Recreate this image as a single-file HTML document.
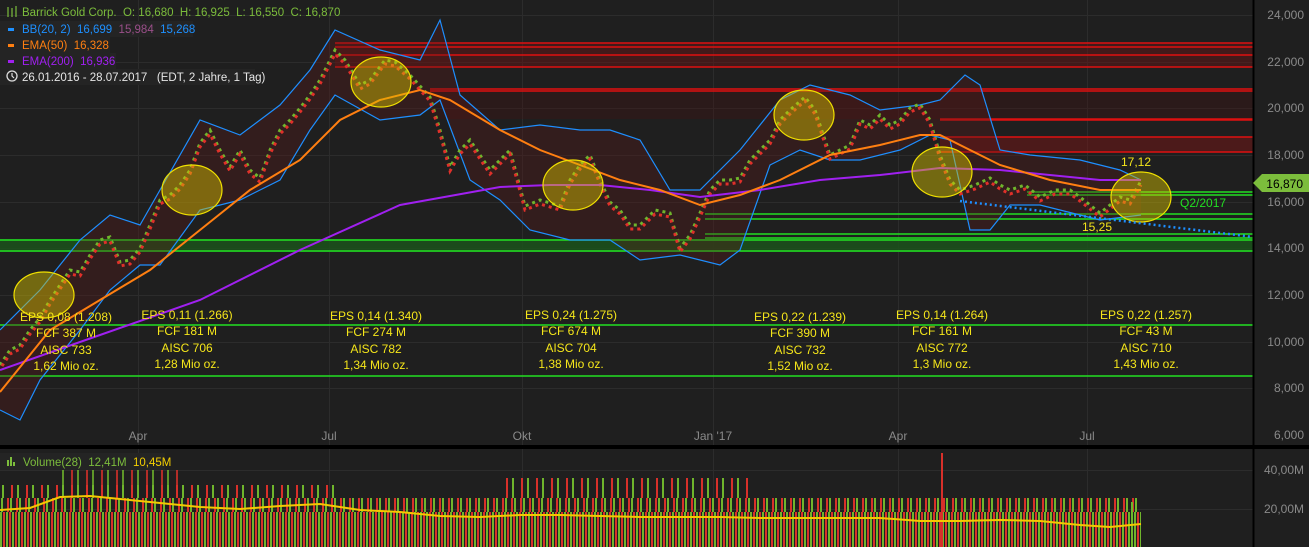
<!DOCTYPE html>
<html><head><meta charset="utf-8"><style>
html,body{margin:0;padding:0;background:#1f1f1f;overflow:hidden}
svg{display:block;font-family:"Liberation Sans",sans-serif}
</style></head><body>
<svg width="1309" height="547" viewBox="0 0 1309 547" xmlns="http://www.w3.org/2000/svg">
<defs>
<pattern id="vb" width="6" height="100" patternUnits="userSpaceOnUse"><rect x="0" y="0" width="2" height="100" fill="#6fb52c"/><rect x="3" y="0" width="2" height="100" fill="#d8302a"/></pattern>
<pattern id="vb2" width="9" height="100" patternUnits="userSpaceOnUse"><rect x="1" y="0" width="2" height="100" fill="#6fb52c"/><rect x="7" y="0" width="2" height="100" fill="#d8302a"/></pattern>
<pattern id="vb3" width="15" height="100" patternUnits="userSpaceOnUse"><rect x="2" y="0" width="2" height="100" fill="#6fb52c"/><rect x="11" y="0" width="2" height="100" fill="#d8302a"/></pattern>
</defs>
<rect width="1309" height="547" fill="#1f1f1f"/>
<g stroke="#2c2c2c">
<line x1="0" x2="1253" y1="15.5" y2="15.5"/><line x1="0" x2="1253" y1="62.5" y2="62.5"/><line x1="0" x2="1253" y1="108.5" y2="108.5"/><line x1="0" x2="1253" y1="155.5" y2="155.5"/><line x1="0" x2="1253" y1="202.5" y2="202.5"/><line x1="0" x2="1253" y1="248.5" y2="248.5"/><line x1="0" x2="1253" y1="295.5" y2="295.5"/><line x1="0" x2="1253" y1="342.5" y2="342.5"/><line x1="0" x2="1253" y1="388.5" y2="388.5"/><line x1="0" x2="1253" y1="470.5" y2="470.5"/><line x1="0" x2="1253" y1="509.5" y2="509.5"/>
<line x1="138.5" x2="138.5" y1="0" y2="547"/><line x1="329.5" x2="329.5" y1="0" y2="547"/><line x1="522.5" x2="522.5" y1="0" y2="547"/><line x1="713.5" x2="713.5" y1="0" y2="547"/><line x1="898.5" x2="898.5" y1="0" y2="547"/><line x1="1087.5" x2="1087.5" y1="0" y2="547"/>
</g>
<rect x="335" y="43" width="918" height="24" fill="#6a1515" opacity="0.45"/>
<rect x="430" y="89" width="823" height="30" fill="#4a1212" opacity="0.3"/>
<rect x="940" y="137" width="313" height="15" fill="#7a1515" opacity="0.5"/>
<rect x="0" y="239" width="1253" height="13" fill="#1a551a" opacity="0.8"/>
<g stroke="#e01010" stroke-width="1.5">
<line x1="335" x2="1253" y1="43" y2="43"/><line x1="335" x2="1253" y1="47" y2="47"/><line x1="335" x2="1253" y1="55" y2="55"/><line x1="335" x2="1253" y1="67" y2="67"/><line x1="430" x2="1253" y1="89" y2="89"/><line x1="430" x2="1253" y1="91" y2="91"/><line x1="940" x2="1253" y1="119" y2="119"/><line x1="940" x2="1253" y1="120" y2="120"/><line x1="940" x2="1253" y1="137" y2="137"/><line x1="940" x2="1253" y1="152" y2="152"/>
</g>
<g stroke="#22e022" stroke-width="1.5">
<line x1="1027" x2="1253" y1="192" y2="192"/><line x1="1027" x2="1253" y1="195" y2="195"/><line x1="705" x2="1253" y1="214" y2="214"/><line x1="705" x2="1253" y1="219" y2="219"/><line x1="705" x2="1253" y1="234" y2="234"/><line x1="705" x2="1253" y1="238" y2="238"/><line x1="0" x2="1253" y1="240" y2="240"/><line x1="0" x2="1253" y1="251" y2="251"/><line x1="0" x2="1253" y1="325" y2="325"/><line x1="0" x2="1253" y1="376" y2="376"/>
</g>
<path d="M0 330L40 290L80 240L110 215L140 225L160 190L200 120L240 135L280 105L310 70L335 30L380 50L420 60L440 20L460 95L500 130L540 125L580 130L610 130L640 140L670 190L700 190L740 150L780 100L810 85L850 95L880 110L920 105L940 100L965 75L980 85L1000 150L1030 155L1080 160L1120 170L1141 180L1141 215L1100 220L1080 215L1040 205L1010 205L990 230L970 230L950 140L930 135L900 150L860 160L830 160L800 150L770 165L740 250L720 265L680 255L640 260L610 240L570 240L530 230L500 200L470 180L440 100L420 115L380 120L335 95L310 130L280 180L240 200L200 210L160 265L140 265L110 290L80 330L40 380L20 420L0 410Z" fill="#5a1a1a" opacity="0.35"/>
<g fill="none" stroke="#1e8fff" stroke-width="1.2">
<path d="M0 330L40 290L80 240L110 215L140 225L160 190L200 120L240 135L280 105L310 70L335 30L380 50L420 60L440 20L460 95L500 130L540 125L580 130L610 130L640 140L670 190L700 190L740 150L780 100L810 85L850 95L880 110L920 105L940 100L965 75L980 85L1000 150L1030 155L1080 160L1120 170L1141 180"/>
<path d="M0 410L20 420L40 380L80 330L110 290L140 265L160 265L200 210L240 200L280 180L310 130L335 95L380 120L420 115L440 100L470 180L500 200L530 230L570 240L610 240L640 260L680 255L720 265L740 250L770 165L800 150L830 160L860 160L900 150L930 135L950 140L970 230L990 230L1010 205L1040 205L1080 215L1100 220L1141 215"/>
</g>
<g fill="none" stroke-width="3">
<path d="M0 365L10 350L20 345L30 330L40 318L50 300L60 285L70 270L80 272L90 255L100 240L110 237L120 262L130 260L140 248L150 225L160 200L170 195L180 185L190 170L200 143L210 130L220 150L230 167L240 150L250 170L260 178L270 150L280 130L290 120L300 108L310 95L320 80L335 50L345 60L360 85L370 80L385 60L395 62L410 75L430 97L440 130L450 167L460 150L470 140L480 155L490 170L500 160L510 150L525 206L540 200L560 206L570 180L580 165L590 155L600 180L610 202L620 210L630 225L640 225L655 210L670 213L680 248L690 235L700 213L710 190L720 180L730 180L740 178L750 160L760 150L770 140L780 120L790 110L805 97L815 110L830 155L840 150L850 145L860 120L870 125L880 115L890 125L900 120L910 108L920 104L930 120L940 155L950 180L960 190L975 185L990 178L1000 185L1010 190L1025 185L1040 197L1055 190L1070 190L1080 197L1090 205L1100 213L1110 205L1120 197L1130 200L1141 181" stroke="#6fb52c" stroke-dasharray="3 4"/>
<path d="M0 365L10 350L20 345L30 330L40 318L50 300L60 285L70 270L80 272L90 255L100 240L110 237L120 262L130 260L140 248L150 225L160 200L170 195L180 185L190 170L200 143L210 130L220 150L230 167L240 150L250 170L260 178L270 150L280 130L290 120L300 108L310 95L320 80L335 50L345 60L360 85L370 80L385 60L395 62L410 75L430 97L440 130L450 167L460 150L470 140L480 155L490 170L500 160L510 150L525 206L540 200L560 206L570 180L580 165L590 155L600 180L610 202L620 210L630 225L640 225L655 210L670 213L680 248L690 235L700 213L710 190L720 180L730 180L740 178L750 160L760 150L770 140L780 120L790 110L805 97L815 110L830 155L840 150L850 145L860 120L870 125L880 115L890 125L900 120L910 108L920 104L930 120L940 155L950 180L960 190L975 185L990 178L1000 185L1010 190L1025 185L1040 197L1055 190L1070 190L1080 197L1090 205L1100 213L1110 205L1120 197L1130 200L1141 181" stroke="#e0302a" stroke-dasharray="3 4" stroke-dashoffset="3.5" transform="translate(0,4)"/>
</g>
<path d="M0 370L100 335L200 300L300 250L400 205L500 187L550 185L600 185L650 190L700 197L760 190L820 180L880 175L940 168L1000 170L1100 180L1141 180" fill="none" stroke="#a020f0" stroke-width="2"/>
<path d="M0 392L50 330L100 300L150 270L200 230L250 190L300 160L340 120L380 100L420 90L450 100L500 130L540 150L580 165L620 180L660 190L700 205L740 195L780 180L830 155L880 145L920 135L940 135L970 150L1000 165L1050 180L1100 190L1141 190" fill="none" stroke="#ff7f11" stroke-width="2"/>
<g fill="#d9c400" fill-opacity="0.45" stroke="#f0e000" stroke-width="1.2">
<ellipse cx="44" cy="295" rx="30" ry="23"/><ellipse cx="192" cy="190" rx="30" ry="25"/><ellipse cx="381" cy="82" rx="30" ry="25"/><ellipse cx="573" cy="185" rx="30" ry="25"/><ellipse cx="804" cy="115" rx="30" ry="25"/><ellipse cx="942" cy="172" rx="30" ry="25"/><ellipse cx="1141" cy="197" rx="30" ry="25"/>
</g>
<line x1="960" y1="201" x2="1253" y2="237" stroke="#1e8fff" stroke-width="2.5" stroke-dasharray="2 3"/>
<g fill="#f5e61a" font-size="12" text-anchor="middle">
<text x="66" y="321">EPS 0,08 (1.208)</text><text x="66" y="337">FCF 387 M</text><text x="66" y="354">AISC 733</text><text x="66" y="370">1,62 Mio oz.</text>
<text x="187" y="319">EPS 0,11 (1.266)</text><text x="187" y="335">FCF 181 M</text><text x="187" y="352">AISC 706</text><text x="187" y="368">1,28 Mio oz.</text>
<text x="376" y="320">EPS 0,14 (1.340)</text><text x="376" y="336">FCF 274 M</text><text x="376" y="353">AISC 782</text><text x="376" y="369">1,34 Mio oz.</text>
<text x="571" y="319">EPS 0,24 (1.275)</text><text x="571" y="335">FCF 674 M</text><text x="571" y="352">AISC 704</text><text x="571" y="368">1,38 Mio oz.</text>
<text x="800" y="321">EPS 0,22 (1.239)</text><text x="800" y="337">FCF 390 M</text><text x="800" y="354">AISC 732</text><text x="800" y="370">1,52 Mio oz.</text>
<text x="942" y="319">EPS 0,14 (1.264)</text><text x="942" y="335">FCF 161 M</text><text x="942" y="352">AISC 772</text><text x="942" y="368">1,3 Mio oz.</text>
<text x="1146" y="319">EPS 0,22 (1.257)</text><text x="1146" y="335">FCF 43 M</text><text x="1146" y="352">AISC 710</text><text x="1146" y="368">1,43 Mio oz.</text>
<text x="1136" y="166">17,12</text><text x="1097" y="231">15,25</text>
</g>
<text x="1180" y="207" fill="#22e022" font-size="12">Q2/2017</text>
<rect x="0" y="445" width="1309" height="4" fill="#000"/>
<line x1="1253.5" y1="0" x2="1253.5" y2="547" stroke="#000" stroke-width="2"/>
<g font-size="12" fill="#8a8a8a" text-anchor="middle">
<text x="138" y="440">Apr</text><text x="329" y="440">Jul</text><text x="522" y="440">Okt</text><text x="713" y="440">Jan '17</text><text x="898" y="440">Apr</text><text x="1087" y="440">Jul</text>
</g>
<g font-size="12" fill="#8a8a8a" text-anchor="end">
<text x="1304" y="19">24,000</text><text x="1304" y="66">22,000</text><text x="1304" y="112">20,000</text><text x="1304" y="159">18,000</text><text x="1304" y="206">16,000</text><text x="1304" y="252">14,000</text><text x="1304" y="299">12,000</text><text x="1304" y="346">10,000</text><text x="1304" y="392">8,000</text><text x="1304" y="439">6,000</text>
<text x="1304" y="474">40,00M</text><text x="1304" y="513">20,00M</text>
</g>
<path d="M1253 183L1262 174H1309V192H1262Z" fill="#7cbd3c"/>
<text x="1303" y="188" text-anchor="end" fill="#000" font-size="12">16,870</text>
<!-- volume -->
<rect x="0" y="512" width="1141" height="35" fill="url(#vb)"/>
<rect x="0" y="498" width="1141" height="14" fill="url(#vb2)"/>
<rect x="0" y="485" width="340" height="13" fill="url(#vb3)"/>
<rect x="500" y="478" width="250" height="20" fill="url(#vb3)"/>
<rect x="60" y="470" width="120" height="15" fill="url(#vb3)" opacity="0.8"/>
<rect x="941" y="453" width="2" height="94" fill="#d8302a"/>
<rect x="1131" y="502" width="2" height="45" fill="#6fb52c"/>
<path d="M0 510L30 508L60 497L90 496L120 499L160 503L200 507L240 509L280 506L320 504L360 510L400 512L440 516L480 517L520 515L560 515L600 516L640 517L680 517L720 517L760 518L800 518L840 518L880 518L920 521L960 521L1000 520L1040 521L1080 525L1110 527L1141 524" fill="none" stroke="#f5c800" stroke-width="2"/>
<g font-size="11.5">
<text x="22" y="16" fill="#7cbd3c" xml:space="preserve">Barrick Gold Corp.  O: 16,680  H: 16,925  L: 16,550  C: 16,870</text>
<g stroke="#7cbd3c" stroke-width="1.2"><line x1="8" y1="7" x2="8" y2="17"/><line x1="12" y1="8" x2="12" y2="17"/><line x1="16" y1="6" x2="16" y2="17"/></g>
<rect x="0" y="21" width="193" height="16" fill="#242424"/>
<rect x="8" y="28" width="6" height="3" fill="#1e90ff"/>
<text x="22" y="33" fill="#1e90ff" xml:space="preserve">BB(20, 2)  16,699  <tspan fill="#9b4f8a">15,984</tspan>  15,268</text>
<rect x="0" y="37" width="110" height="16" fill="#242424"/>
<rect x="8" y="44" width="6" height="3" fill="#ff7f11"/>
<text x="22" y="49" fill="#ff7f11" xml:space="preserve">EMA(50)  16,328</text>
<rect x="0" y="53" width="116" height="16" fill="#242424"/>
<rect x="8" y="60" width="6" height="3" fill="#a020f0"/>
<text x="22" y="65" fill="#a020f0" xml:space="preserve">EMA(200)  16,936</text>
<rect x="0" y="69" width="255" height="16" fill="#242424"/>
<circle cx="12" cy="76" r="5" fill="none" stroke="#ddd" stroke-width="1.3"/><path d="M12 73V76L14 78" stroke="#ddd" fill="none" stroke-width="1.2"/>
<text x="22" y="81" fill="#e6e6e6" xml:space="preserve">26.01.2016 - 28.07.2017   (EDT, 2 Jahre, 1 Tag)</text>
<rect x="0" y="453" width="165" height="17" fill="#242424"/>
<g fill="#7cbd3c"><rect x="7" y="460" width="2" height="6"/><rect x="10" y="457" width="2" height="9"/><rect x="13" y="462" width="2" height="4"/></g>
<text x="23" y="466" fill="#7cbd3c" xml:space="preserve">Volume(28)  12,41M  <tspan fill="#f5d000">10,45M</tspan></text>
</g>
</svg>
</body></html>
